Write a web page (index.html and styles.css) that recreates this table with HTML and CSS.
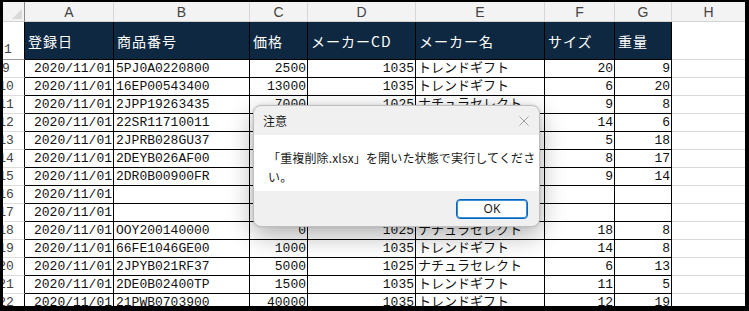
FILE: index.html
```html
<!DOCTYPE html>
<html lang="ja">
<head>
<meta charset="utf-8">
<title>Excel</title>
<link rel="stylesheet" href="styles.css">
</head>
<body>
<div class="frame">
  <div class="sheet">
    <div class="corner"><span class="tri"></span></div>
    <div class="colh">A</div>
    <div class="colh">B</div>
    <div class="colh">C</div>
    <div class="colh">D</div>
    <div class="colh">E</div>
    <div class="colh">F</div>
    <div class="colh">G</div>
    <div class="colh last">H</div>

    <div class="rowh hrow"><span>1</span></div>
    <div class="hd">登録日</div>
    <div class="hd">商品番号</div>
    <div class="hd">価格</div>
    <div class="hd">メーカーCD</div>
    <div class="hd">メーカー名</div>
    <div class="hd">サイズ</div>
    <div class="hd">重量</div>
    <div class="blank"></div>

    <div class="rowh"><span>9</span></div><div class="c r">2020/11/01</div><div class="c">5PJ0A0220800</div><div class="c r">2500</div><div class="c r">1035</div><div class="c">トレンドギフト</div><div class="c r">20</div><div class="c r">9</div><div class="blank"></div>
    <div class="rowh"><span>10</span></div><div class="c r">2020/11/01</div><div class="c">16EP00543400</div><div class="c r">13000</div><div class="c r">1035</div><div class="c">トレンドギフト</div><div class="c r">6</div><div class="c r">20</div><div class="blank"></div>
    <div class="rowh"><span>11</span></div><div class="c r">2020/11/01</div><div class="c">2JPP19263435</div><div class="c r">7000</div><div class="c r">1025</div><div class="c">ナチュラセレクト</div><div class="c r">9</div><div class="c r">8</div><div class="blank"></div>
    <div class="rowh"><span>12</span></div><div class="c r">2020/11/01</div><div class="c">22SR11710011</div><div class="c r">3000</div><div class="c r">1035</div><div class="c">トレンドギフト</div><div class="c r">14</div><div class="c r">6</div><div class="blank"></div>
    <div class="rowh"><span>13</span></div><div class="c r">2020/11/01</div><div class="c">2JPRB028GU37</div><div class="c r">4000</div><div class="c r">1025</div><div class="c">ナチュラセレクト</div><div class="c r">5</div><div class="c r">18</div><div class="blank"></div>
    <div class="rowh"><span>14</span></div><div class="c r">2020/11/01</div><div class="c">2DEYB026AF00</div><div class="c r">2000</div><div class="c r">1035</div><div class="c">トレンドギフト</div><div class="c r">8</div><div class="c r">17</div><div class="blank"></div>
    <div class="rowh"><span>15</span></div><div class="c r">2020/11/01</div><div class="c">2DR0B00900FR</div><div class="c r">1500</div><div class="c r">1035</div><div class="c">トレンドギフト</div><div class="c r">9</div><div class="c r">14</div><div class="blank"></div>
    <div class="rowh"><span>16</span></div><div class="c r">2020/11/01</div><div class="c"></div><div class="c"></div><div class="c"></div><div class="c"></div><div class="c"></div><div class="c"></div><div class="blank"></div>
    <div class="rowh"><span>17</span></div><div class="c r">2020/11/01</div><div class="c"></div><div class="c"></div><div class="c"></div><div class="c"></div><div class="c"></div><div class="c"></div><div class="blank"></div>
    <div class="rowh"><span>18</span></div><div class="c r">2020/11/01</div><div class="c">OOY200140000</div><div class="c r">0</div><div class="c r">1025</div><div class="c">ナチュラセレクト</div><div class="c r">18</div><div class="c r">8</div><div class="blank"></div>
    <div class="rowh"><span>19</span></div><div class="c r">2020/11/01</div><div class="c">66FE1046GE00</div><div class="c r">1000</div><div class="c r">1035</div><div class="c">トレンドギフト</div><div class="c r">14</div><div class="c r">8</div><div class="blank"></div>
    <div class="rowh"><span>20</span></div><div class="c r">2020/11/01</div><div class="c">2JPYB021RF37</div><div class="c r">5000</div><div class="c r">1025</div><div class="c">ナチュラセレクト</div><div class="c r">6</div><div class="c r">13</div><div class="blank"></div>
    <div class="rowh"><span>21</span></div><div class="c r">2020/11/01</div><div class="c">2DE0B02400TP</div><div class="c r">1500</div><div class="c r">1035</div><div class="c">トレンドギフト</div><div class="c r">11</div><div class="c r">5</div><div class="blank"></div>
    <div class="rowh"><span>22</span></div><div class="c r">2020/11/01</div><div class="c">21PWB0703900</div><div class="c r">40000</div><div class="c r">1035</div><div class="c">トレンドギフト</div><div class="c r">12</div><div class="c r">19</div><div class="blank"></div>
  </div>

  <div class="dialog">
    <div class="dlg-title">
      <span>注意</span>
      <svg class="dlg-close" width="10" height="10" viewBox="0 0 10 10"><path d="M0.5 0.5 L9.5 9.5 M9.5 0.5 L0.5 9.5" stroke="#a0a0a0" stroke-width="1" fill="none"/></svg>
    </div>
    <div class="dlg-body">「重複削除.xlsx」を開いた状態で実行してくださ<br>い。</div>
    <div class="dlg-foot"><button class="ok">OK</button></div>
  </div>
</div>
</body>
</html>
```

FILE: styles.css
```css
html, body {
  margin: 0;
  padding: 0;
  background: #ffffff;
}

.frame {
  position: relative;
  width: 749px;
  height: 311px;
  box-sizing: border-box;
  border-style: solid;
  border-color: #000000;
  border-width: 2px 4px 5px 3px;
  overflow: hidden;
  background: #ffffff;
}

.sheet {
  display: grid;
  grid-template-columns: 22px 89px 136px 58px 108px 129px 70px 57px 1fr;
  grid-template-rows: 20px 38px;
  grid-auto-rows: 18px;
  font-family: "Liberation Mono", "Noto Sans CJK JP", monospace;
  font-size: 13px;
  color: #111111;
}

.sheet > div {
  box-sizing: border-box;
  overflow: hidden;
  white-space: nowrap;
}

.corner {
  position: relative;
  background: #f3f3f3;
  border-right: 1px solid #8a8a8a;
  border-bottom: 1px solid #d2d2d2;
}

.tri {
  position: absolute;
  right: 2px;
  bottom: 2px;
  width: 0;
  height: 0;
  border-style: solid;
  border-width: 0 0 10px 10px;
  border-color: transparent transparent #d9d9d9 transparent;
}

.colh {
  background: #f3f3f3;
  border-right: 1px solid #d6d6d6;
  border-bottom: 1px solid #d2d2d2;
  display: flex;
  align-items: center;
  justify-content: center;
  font-family: "Liberation Sans", "Noto Sans", sans-serif;
  font-size: 14px;
  color: #444444;
}

.colh.last {
  border-right: none;
}

.rowh {
  background: #ffffff;
  border-right: 1px solid #000000;
  border-bottom: 1px solid #dcdcdc;
  display: flex;
  align-items: center;
  font-family: "Liberation Mono", monospace;
  font-size: 13px;
  color: #444444;
}

.rowh span {
  display: block;
  width: 20px;
  margin-left: -7px;
  text-align: center;
}

.rowh.hrow {
  align-items: flex-end;
  border-bottom: 1px solid #9a9a9a;
}

.rowh.hrow span {
  width: 10px;
  margin-left: 0;
  padding-bottom: 2px;
}

.hd {
  background: #0e2841;
  color: #ffffff;
  border-right: 1px solid #000000;
  border-bottom: 1px solid #000000;
  display: flex;
  align-items: center;
  padding-left: 3px;
  font-family: "Noto Sans CJK JP", sans-serif;
  font-size: 14px;
  letter-spacing: 1px;
}

.blank {
  border-bottom: 1px solid #d9d9d9;
}

.c {
  border-right: 1px solid #000000;
  border-bottom: 1px solid #000000;
  display: flex;
  align-items: center;
  padding: 0 2px 0 2px;
  line-height: 17px;
}

.c.r {
  justify-content: flex-end;
  padding-right: 1px;
}

.dialog {
  position: absolute;
  left: 250px;
  top: 103px;
  width: 287px;
  height: 122px;
  box-sizing: border-box;
  border: 1px solid #bfbfbf;
  border-radius: 8px;
  overflow: hidden;
  background: #f0f0f0;
  box-shadow: 0 8px 26px rgba(0, 0, 0, 0.32), 0 0 3px rgba(0, 0, 0, 0.12);
  display: flex;
  flex-direction: column;
  font-family: "Noto Sans CJK JP", sans-serif;
  color: #1a1a1a;
}

.dlg-title {
  height: 29px;
  flex: none;
  display: flex;
  align-items: center;
  justify-content: space-between;
  padding: 0 10px 0 9px;
  font-size: 12px;
}

.dlg-close {
  display: block;
}

.dlg-body {
  height: 56px;
  flex: none;
  box-sizing: border-box;
  background: #ffffff;
  padding: 13px 0 0 14px;
  font-size: 12px;
  line-height: 19px;
  letter-spacing: 0.15px;
  white-space: nowrap;
}

.dlg-foot {
  flex: 1;
  display: flex;
  justify-content: flex-end;
  align-items: flex-start;
  padding: 8px 11px 0 0;
}

.ok {
  width: 72px;
  height: 20px;
  box-sizing: border-box;
  border: 1px solid #0067c0;
  box-shadow: inset 0 0 0 1px #3d8fd6;
  border-radius: 4px;
  background: #ffffff;
  font-family: "Noto Sans", "Liberation Sans", sans-serif;
  font-size: 12px;
  color: #1a1a1a;
  padding: 0;
  line-height: 16px;
}
```
